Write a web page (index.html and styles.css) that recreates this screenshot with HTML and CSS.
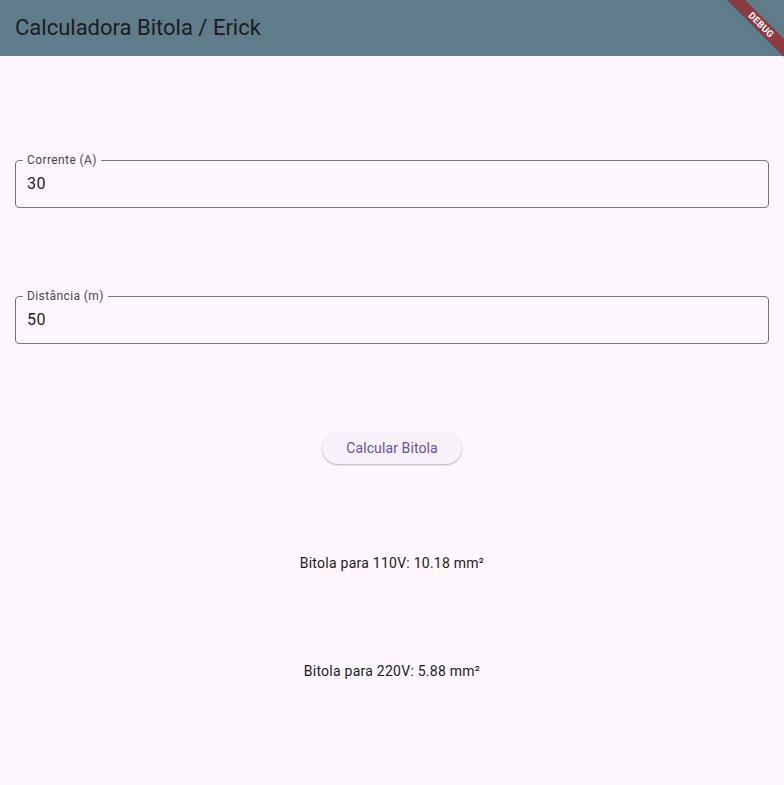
FILE: index.html
```html
<!DOCTYPE html>
<html lang="pt">
<head>
<meta charset="utf-8">
<title>Calculadora Bitola</title>
<link rel="stylesheet" href="styles.css">
</head>
<body>
<div class="app">
  <header class="appbar">
    <h1 class="title">Calculadora Bitola / Erick</h1>
  </header>
  <main class="content">
    <div class="field">
      <span class="label">Corrente (A)</span>
      <span class="value">30</span>
    </div>
    <div class="field">
      <span class="label">Distância (m)</span>
      <span class="value">50</span>
    </div>
    <div class="btn-row">
      <button class="btn">Calcular Bitola</button>
    </div>
    <p class="result">Bitola para 110V: 10.18 mm²</p>
    <p class="result">Bitola para 220V: 5.88 mm²</p>
  </main>
  <div class="banner">DEBUG</div>
</div>
</body>
</html>
```
FILE: styles.css
```css
* { box-sizing: border-box; }
html, body {
  margin: 0;
  padding: 0;
  background: #fef7ff;
  font-family: Roboto, "Noto Sans", sans-serif;
}
.app {
  position: relative;
  width: 784px;
  height: 785px;
  overflow: hidden;
  background: #fef7ff;
}
.appbar {
  height: 56px;
  background: #607d8b;
  display: flex;
  align-items: center;
  padding: 0 15px;
}
.title {
  margin: 0;
  font-size: 22px;
  font-weight: 400;
  color: #1d1b20;
  line-height: 28px;
}
.content {
  height: 729px;
  padding: 16px 15px;
  display: flex;
  flex-direction: column;
  justify-content: space-evenly;
}
.field {
  position: relative;
  height: 48px;
  border: 1px solid #79747e;
  border-radius: 4px;
  display: flex;
  align-items: center;
  padding: 0 11px;
}
.label {
  position: absolute;
  left: 7px;
  top: -9px;
  padding: 0 4px;
  background: #fef7ff;
  font-size: 12px;
  line-height: 16px;
  letter-spacing: 0.4px;
  color: #49454f;
}
.value {
  font-size: 16px;
  line-height: 24px;
  letter-spacing: 0.5px;
  color: #1d1b20;
}
.btn-row {
  display: flex;
  justify-content: center;
}
.btn {
  height: 32px;
  padding: 0 24px;
  border: none;
  border-radius: 16px;
  background: #f7f2fa;
  color: #6750a4;
  font-family: Roboto, "Noto Sans", sans-serif;
  font-size: 14px;
  font-weight: 400;
  letter-spacing: 0.1px;
  box-shadow: 0 1px 2px rgba(0,0,0,0.2), 0 1px 2px 0 rgba(0,0,0,0.1);
}
.result {
  margin: 0;
  text-align: center;
  font-size: 14px;
  line-height: 20px;
  letter-spacing: 0.25px;
  color: #1d1b20;
}
.banner {
  position: absolute;
  left: 706px;
  top: 19px;
  width: 110px;
  height: 12px;
  transform: rotate(45deg);
  background: #8e3a3e;
  color: #fff;
  font-size: 9.5px;
  font-weight: 700;
  line-height: 12px;
  text-align: center;
  letter-spacing: 0.2px;
  box-shadow: 0 0 2px rgba(0,0,0,0.3);
}
```
